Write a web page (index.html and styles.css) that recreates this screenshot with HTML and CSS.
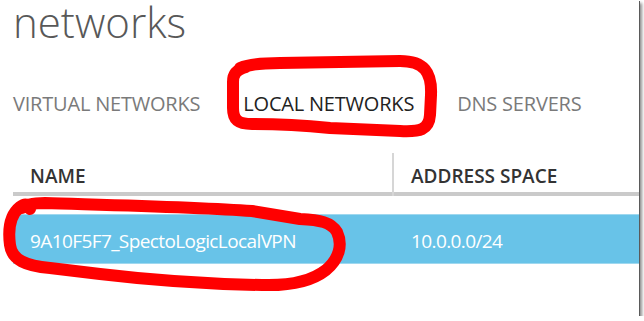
FILE: index.html
```html
<!DOCTYPE html>
<html lang="en">
<head>
  <meta charset="UTF-8" />
  <meta name="viewport" content="width=device-width, initial-scale=1.0" />
  <title>networks</title>
  <link rel="stylesheet" href="styles.css">
</head>
<body>
  <div class="shot">
    <h1 class="title">networks</h1>

    <nav class="tabs">
      <span class="tab">VIRTUAL NETWORKS</span>
      <span class="tab active">LOCAL NETWORKS</span>
      <span class="tab">DNS SERVERS</span>
    </nav>

    <div class="grid">
      <div class="grid-head">
        <div class="col col-name">NAME</div>
        <div class="col col-addr">ADDRESS SPACE</div>
      </div>
      <div class="grid-row selected">
        <div class="col col-name">9A10F5F7_SpectoLogicLocalVPN</div>
        <div class="col col-addr">10.0.0.0/24</div>
      </div>
    </div>

    <!-- red pen marks drawn over the screenshot -->
    <svg class="ink" width="639" height="316" viewBox="0 0 639 316">
      <path d="M240 68 C250 64 262 63 280 63 L400 61 C424 61 432 72 431 95 L430 115 C429 130 420 132 400 131 L330 128 C300 125 275 124 252 124 C238 124 233 120 233 108 L233 82 C233 74 236 70 246 67"/>
      <path d="M30 209 C28 204 25 203 20 207 C10 215 8 230 10 245 C12 260 26 266 50 268 L100 274 C150 280 205 284 262 285 C292 286 312 281 326 270 C339 259 343 245 337 232 C331 222 320 220 300 219 L252 211 C200 207 110 205 45 203 C34 203 26 204 22 208"/>
    </svg>
  </div>
</body>
</html>
```

FILE: styles.css
```css
body {
  margin: 0;
  background: #fff;
  font-family: "Open Sans", "Noto Sans", sans-serif;
}
.shot {
  position: relative;
  width: 639px;
  height: 316px;
  padding-left: 13px;
  box-sizing: border-box;
  background: #fff;
  overflow: hidden;
  box-shadow: 1px 1px 0 #5a5a5a, 3px 3px 3px rgba(0,0,0,0.45);
}
.title {
  margin: 0;
  font-size: 42px;
  line-height: 44px;
  font-weight: 300;
  color: #585858;
}
.tabs {
  display: flex;
  gap: 43px;
  margin-top: 48px;
  font-size: 20px;
  line-height: 24px;
  letter-spacing: -0.2px;
  color: #7a7a7a;
}
.tab.active {
  color: #222;
}
.grid {
  margin-top: 37px;
}
.grid-head,
.grid-row {
  display: flex;
}
.grid-head {
  height: 43px;
  padding-top: 3px;
  line-height: 40px;
  box-sizing: border-box;
  border-bottom: 4px solid #cacaca;
  font-size: 19px;
  font-weight: 600;
  color: #333;
}
.grid-head .col {
  height: 40px;
}
.grid-row {
  margin-top: 18px;
  height: 50px;
  line-height: 52px;
  font-size: 19px;
  letter-spacing: -0.6px;
  color: #fff;
  box-sizing: border-box;
}
.grid-row.selected {
  background: #68c3e8;
  border-top: 1px solid #9fd8ef;
  border-bottom: 1px solid #9fd8ef;
}
.col-name {
  width: 379px;
  padding-left: 17px;
  box-sizing: border-box;
}
.col-addr {
  padding-left: 19px;
}
.grid-head .col-addr {
  border-left: 2px solid #d6d6d6;
  padding-left: 17px;
  margin-top: -3px;
  height: 43px;
  padding-top: 3px;
  box-sizing: border-box;
}
.ink {
  position: absolute;
  left: 0;
  top: 0;
  fill: none;
  stroke: #f00;
  stroke-width: 12;
  stroke-linecap: round;
  stroke-linejoin: round;
}
```
